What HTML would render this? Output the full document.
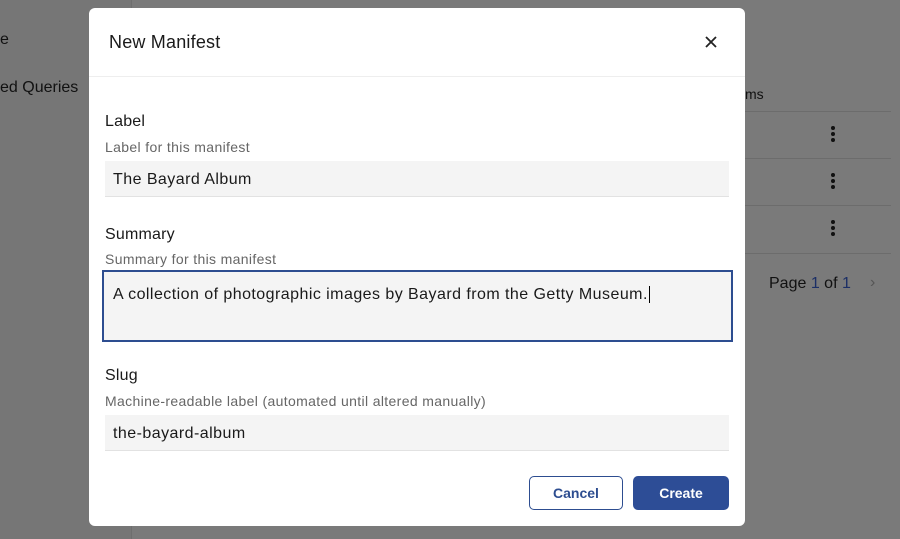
<!DOCTYPE html><html><head><style>
body{margin:0;width:900px;height:539px;background:#7a7a7a;font-family:"Liberation Sans",sans-serif;position:relative;overflow:hidden}
.abs{position:absolute}
.side{left:0;top:0;width:131px;height:539px;background:#767676;border-right:1px solid #6e6e6e}
.t{color:#111;font-size:16px}
.modal{left:89px;top:8px;width:656px;height:518px;background:#fff;border-radius:6px}
.lab{font-size:16px;color:#1a1a1a;left:16px;letter-spacing:0.2px}
.hint{font-size:14px;color:#666;left:16px;letter-spacing:0.35px}
.inp{left:16px;width:624px;height:36px;background:#f4f4f4;border-bottom:1px solid #e2e2e2;font-size:16px;color:#1a1a1a;box-sizing:border-box;padding:10px 8px;letter-spacing:0.45px}
.line{height:1px;background:#6c6c6c;left:705px;width:186px}
.dots{left:831px;width:4px}
.dots i{display:block;width:4px;height:4px;background:#111;border-radius:50%;margin-bottom:2px}
</style></head><body>
<div class="abs side"></div>
<div class="abs t" style="left:0;top:31px">e</div>
<div class="abs t" style="left:0;top:79px">ed Queries</div>
<div class="abs t" style="left:745px;top:86px;font-size:14px">ms</div>
<div class="abs line" style="top:111px"></div>
<div class="abs line" style="top:158px"></div>
<div class="abs line" style="top:205px"></div>
<div class="abs line" style="top:253px"></div>
<div class="abs dots" style="top:126px"><i></i><i></i><i></i></div>
<div class="abs dots" style="top:173px"><i></i><i></i><i></i></div>
<div class="abs dots" style="top:220px"><i></i><i></i><i></i></div>
<div class="abs t" style="left:769px;top:275px">Page <span style="color:#1c2f66">1</span> of <span style="color:#1c2f66">1</span></div>
<div class="abs" style="left:870px;top:274px;color:#555;font-size:16px">&#8250;</div>
<div class="abs modal">
<div class="abs" style="left:20px;top:24px;font-size:18px;color:#1a1a1a;letter-spacing:0.2px">New Manifest</div>
<svg class="abs" style="left:615px;top:27px" width="14" height="14"><path d="M2 2L12 12M12 2L2 12" stroke="#222" stroke-width="1.8"/></svg>
<div class="abs" style="left:0;top:68px;width:656px;height:1px;background:#eee"></div>
<div class="abs lab" style="top:105px">Label</div>
<div class="abs hint" style="top:131px">Label for this manifest</div>
<div class="abs inp" style="top:153px">The Bayard Album</div>
<div class="abs lab" style="top:218px">Summary</div>
<div class="abs hint" style="top:243px">Summary for this manifest</div>
<div class="abs inp" style="top:262px;left:13px;width:631px;height:72px;border:2px solid #2d4d90;padding:14px 9px">A collection of photographic images by Bayard from the Getty Museum.<span style="border-left:1px solid #000;margin-left:1px"></span></div>
<div class="abs lab" style="top:359px">Slug</div>
<div class="abs hint" style="top:385px">Machine-readable label (automated until altered manually)</div>
<div class="abs inp" style="top:407px">the-bayard-album</div>
<div class="abs" style="left:440px;top:468px;width:92px;height:32px;border:1px solid #2d4d90;border-radius:5px;color:#2d4d90;font-size:14px;font-weight:bold;text-align:center;line-height:32px">Cancel</div>
<div class="abs" style="left:544px;top:468px;width:96px;height:34px;background:#2d4d96;border-radius:5px;color:#fff;font-size:14px;font-weight:bold;text-align:center;line-height:34px">Create</div>
</div>
</body></html>
